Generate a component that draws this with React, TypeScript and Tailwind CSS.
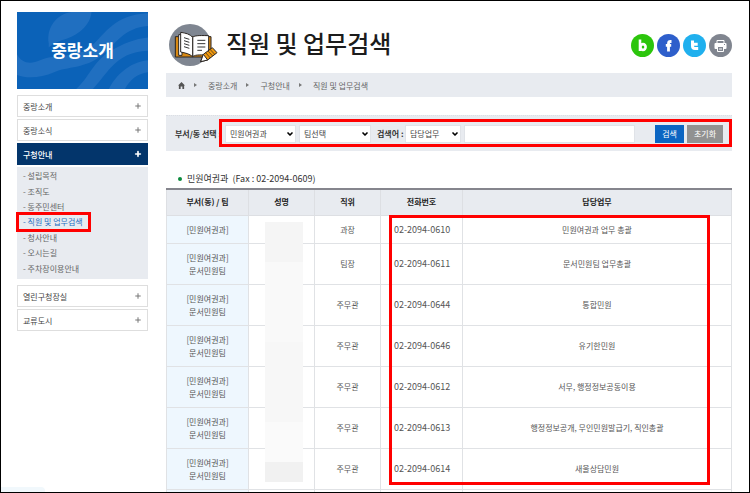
import React from "react";
import { ChevronDown, Plus } from "lucide-react";

const subMenu = ["설립목적", "조직도", "동주민센터", "직원 및 업무검색", "청사안내", "오시는길", "주차장이용안내"];

const breadcrumbs = ["중랑소개", "구청안내", "직원 및 업무검색"];

const rows = [
  { team: "", position: "과장", phone: "02-2094-0610", duty: "민원여권과 업무 총괄" },
  { team: "문서민원팀", position: "팀장", phone: "02-2094-0611", duty: "문서민원팀 업무총괄" },
  { team: "문서민원팀", position: "주무관", phone: "02-2094-0644", duty: "통합민원" },
  { team: "문서민원팀", position: "주무관", phone: "02-2094-0646", duty: "유기한민원" },
  { team: "문서민원팀", position: "주무관", phone: "02-2094-0612", duty: "서무, 행정정보공동이용" },
  { team: "문서민원팀", position: "주무관", phone: "02-2094-0613", duty: "행정정보공개, 무인민원발급기, 직인총괄" },
  { team: "문서민원팀", position: "주무관", phone: "02-2094-0614", duty: "새울상담민원" },
];

function MenuItem({ label, active = false }: { label: string; active?: boolean }) {
  return (
    <a
      href="#"
      className={
        active
          ? "flex h-[22px] items-center justify-between bg-[#03356b] px-1.5 font-medium text-white"
          : "flex h-[22px] items-center justify-between border border-[#dedede] bg-white px-[5px] text-[#444]"
      }
    >
      {label}
      <Plus className={active ? "size-2 text-white" : "size-2 text-[#777]"} strokeWidth={active ? 5 : 3} />
    </a>
  );
}

function Sidebar() {
  return (
    <nav className="w-[131px] shrink-0 pt-[11px]">
      <div className="relative flex h-[77px] items-center justify-center overflow-hidden bg-[#0b62b8]">
        <svg viewBox="9 6 392 230" className="absolute inset-0 size-full" preserveAspectRatio="none" aria-hidden="true">
          <g fill="#206fc0">
            <path d="M104 100C96 52 128 12 172 6H232C228 48 190 76 150 88C130 94 112 104 104 112Z" />
            <path d="M9 132C22 158 48 164 78 150C120 130 190 146 232 108C272 72 300 14 401 10V48C330 52 302 104 262 136C212 176 160 168 120 186C82 202 40 206 9 194Z" />
            <path d="M186 236C222 206 238 152 290 122C326 100 362 86 401 82V122C350 124 318 142 290 172C270 194 252 220 236 236Z" />
            <path d="M284 236C304 196 344 156 401 150V186C368 190 346 210 332 236Z" />
          </g>
        </svg>
        <h2 className="relative pb-0.5 text-[17px] font-bold text-white">중랑소개</h2>
      </div>
      <div className="mt-1.5 flex flex-col gap-0.5">
        <MenuItem label="중랑소개" />
        <MenuItem label="중랑소식" />
        <MenuItem label="구청안내" active />
        <ul className="grid h-[112px] grid-rows-7 bg-[#e8ebf0] pt-px pb-[3px] text-[#666]">
          {subMenu.map((item) => (
            <li key={item} className="relative flex items-center pl-1.5">
              {item === "직원 및 업무검색" ? (
                <>
                  <a href="#" className="text-[#1f6fc2]">- {item}</a>
                  <span className="absolute -top-0.5 -left-px h-5 w-[75px] border-3 border-[#f00]" />
                </>
              ) : (
                <a href="#">- {item}</a>
              )}
            </li>
          ))}
        </ul>
      </div>
      <div className="mt-1.5 flex flex-col gap-0.5">
        <MenuItem label="열린구청장실" />
        <MenuItem label="교류도시" />
      </div>
    </nav>
  );
}

function BookIcon() {
  return (
    <svg viewBox="27 72 147 126" className="h-[42px] w-[49px]" aria-hidden="true">
      <circle cx="90" cy="135" r="63" fill="#7f8691" />
      <g stroke="#2a2522" strokeWidth="3" strokeLinejoin="round">
        <path d="M46 110h107v61H46z" fill="#d98a14" />
        <path d="M56 104h10v62H56z" fill="#fff" />
        <path d="M98 112c6-5 14-6 48-5v58c-34-1-42 0-48 5z" fill="#fff" />
        <path d="M62 97c14 2 28 5 36 15v58c-10-9-22-11-36-14z" fill="#fff" />
      </g>
      <path d="M72 113l16 5M72 122l16 5M72 131l16 5M72 140l16 5M112 121h24M112 131h24M112 141h24M112 151h14" stroke="#333" strokeWidth="3" fill="none" />
      <g stroke="#2a2522" strokeWidth="3" strokeLinejoin="round">
        <path d="M122 185l8-22 27-20 14 15-28 22z" fill="#f0990f" />
        <path d="M122 185l8-22 13 17z" fill="#fff" />
        <path d="M137 158l14 16M144 153l14 15M150 148l14 15" fill="none" strokeWidth="2" />
      </g>
    </svg>
  );
}

function SocialLinks() {
  return (
    <div className="flex gap-[3px]">
      <a href="#" aria-label="블로그" className="size-[23px] rounded-full bg-[#2cc50c]">
        <svg viewBox="0 0 23 23" fill="none" stroke="#fff" strokeWidth="2.6"><path d="M9 5.500v11.500" /><ellipse cx="12" cy="13" rx="2.600" ry="2.900" /></svg>
      </a>
      <a href="#" aria-label="페이스북" className="size-[23px] rounded-full bg-[#2e5fcb]">
        <svg viewBox="0 0 23 23" fill="none" stroke="#fff" strokeWidth="2.800"><path d="M14.500 7.500h-1c-1.400 0-2 .6-2 2V17.500M8.800 11.300h5.400" /></svg>
      </a>
      <a href="#" aria-label="트위터" className="size-[23px] rounded-full bg-[#20b0ee]">
        <svg viewBox="0 0 23 23" fill="none" stroke="#fff" strokeWidth="3"><path d="M9.500 6.500v5.500c0 2 .8 2.500 2.500 2.500h3.200M9.500 10.200h5.200" /></svg>
      </a>
      <button type="button" aria-label="인쇄" className="size-[23px] rounded-full bg-[#80858f]">
        <svg viewBox="0 0 23 23">
          <path d="M8 6.500h7v3H8z" fill="#80858f" stroke="#fff" />
          <rect x="5.500" y="9" width="12" height="6" rx="1" fill="#fff" />
          <path d="M8.500 12.500h6v5h-6z" fill="#80858f" stroke="#fff" />
          <path d="M10 15h3" stroke="#fff" />
          <path d="M15 10.500h1" stroke="#80858f" />
        </svg>
      </button>
    </div>
  );
}

function Select({ label, value, width }: { label: string; value: string; width: string }) {
  return (
    <div className={`relative h-[18px] shrink-0 ${width}`}>
      <select aria-label={label} className="size-full appearance-none border border-[#e0e3e8] bg-white pl-1 text-[8px] text-[#444]">
        <option>{value}</option>
      </select>
      <ChevronDown className="pointer-events-none absolute top-[5px] right-0.5 size-2 text-black" strokeWidth={5} />
    </div>
  );
}

function SearchForm() {
  return (
    <form className="relative mt-[18px] flex h-9 items-center border-t border-dotted border-[#dcdfe4] bg-[#e8ebf0] px-[9px]">
      <span className="w-[50px] shrink-0 font-bold whitespace-nowrap text-[#333]">부서/동 선택 :</span>
      <div className="flex gap-[3px]">
        <Select label="부서/동" value="민원여권과" width="w-[71px]" />
        <Select label="팀" value="팀선택" width="w-[72px]" />
      </div>
      <label htmlFor="keyword" className="ml-1.5 w-7 shrink-0 font-bold whitespace-nowrap text-[#333]">검색어 :</label>
      <Select label="검색 구분" value="담당업무" width="w-[56px]" />
      <input id="keyword" type="text" className="ml-[3px] h-[18px] min-w-0 flex-1 border border-[#e0e3e8] bg-white px-1" />
      <button type="submit" className="ml-5 h-[18px] w-[29px] shrink-0 bg-[#0b65c2] text-white">검색</button>
      <button type="reset" className="ml-[3px] h-[18px] w-9 shrink-0 bg-[#919191] text-white">초기화</button>
      <span className="pointer-events-none absolute top-[3px] right-0 left-[53px] h-7 border-3 border-[#f00]" />
    </form>
  );
}

function StaffTable() {
  return (
    <div className="relative mt-[3px]">
      <table className="w-full table-fixed border-collapse border-t-2 border-[#85858d] text-center text-[#555]">
        <colgroup>
          <col className="w-[82px]" />
          <col className="w-[66px]" />
          <col className="w-[66px]" />
          <col className="w-[82px]" />
          <col />
        </colgroup>
        <thead>
          <tr className="h-[26px] bg-[#e8ebf0] text-[#222]">
            {["부서(동) / 팀", "성명", "직위", "전화번호", "담당업무"].map((heading) => (
              <th key={heading} className="border-x border-b border-[#dddfe3] pb-0.5 font-bold">{heading}</th>
            ))}
          </tr>
        </thead>
        <tbody>
          {rows.map((row) => (
            <tr key={row.phone} className={row.team ? "h-[41px]" : "h-7"}>
              <td className="border border-[#e0e2e5] bg-[#eef7fe]">
                [민원여권과]
                {row.team && <div>{row.team}</div>}
              </td>
              <td className="border border-[#e0e2e5]" />
              <td className="border border-[#e0e2e5]">{row.position}</td>
              <td className="border border-[#e0e2e5] pl-[13px] text-left text-[9px]">{row.phone}</td>
              <td className="border border-[#e0e2e5]">{row.duty}</td>
            </tr>
          ))}
          <tr className="h-[41px]">
            <td className="border border-[#e0e2e5] bg-[#eef7fe]" />
            <td className="border border-[#e0e2e5]" />
            <td className="border border-[#e0e2e5]" />
            <td className="border border-[#e0e2e5]" />
            <td className="border border-[#e0e2e5]" />
          </tr>
        </tbody>
      </table>
      <div className="absolute top-[34px] left-[99px] w-[38px]">
        <div className="h-10 bg-[#f5f5f5]" />
        <div className="h-20 bg-[#f9f9f9]" />
        <div className="h-20 bg-[#f7f7f7]" />
        <div className="h-10 bg-[#fafafa]" />
        <div className="h-5 bg-[#f1f1f1]" />
      </div>
      <div className="pointer-events-none absolute top-[27px] right-[22px] left-[223px] h-[270px] border-3 border-[#f00]" />
    </div>
  );
}

export default function App() {
  return (
    <div className="relative flex h-screen gap-[18px] overflow-hidden border border-black bg-white pr-[17px] pl-4 font-['Noto_Sans_CJK_KR',sans-serif] text-[8px] leading-[13px]">
      <Sidebar />
      <main className="min-w-0 flex-1">
        <header className="flex h-[72px] items-center pt-4 pl-[3px]">
          <BookIcon />
          <h1 className="ml-2 flex-1 pb-1 text-[24px] leading-8 font-medium text-[#1c1c1c]">직원 및 업무검색</h1>
          <SocialLinks />
        </header>
        <div className="flex h-6 items-center bg-[#e8ebf0] pl-3 text-[#666]">
          <a href="#" aria-label="홈">
            <svg viewBox="0 0 8 8" className="size-[7px]" fill="#555"><path d="M4 0l4 4H7v4H5V5H3v3H1V4H0z" /></svg>
          </a>
          {breadcrumbs.map((crumb) => (
            <React.Fragment key={crumb}>
              <svg viewBox="0 0 3 4" className="mr-[11px] ml-[9px] h-1 w-[3px]" fill="#777" aria-hidden="true"><path d="M0 0l3 2-3 2z" /></svg>
              <a href="#">{crumb}</a>
            </React.Fragment>
          ))}
        </div>
        <SearchForm />
        <h3 className="mt-[21px] flex items-center pl-3 text-[9px] text-[#333]">
          <span className="mr-[5px] size-1 rounded-full bg-[#0a8a3c]" />
          <span className="whitespace-pre">민원여권과  (Fax : 02-2094-0609)</span>
        </h3>
        <StaffTable />
      </main>
      <div className="absolute bottom-0 left-0 h-[5px] w-11 rounded-tr-sm bg-[#f1f8fc]" />
    </div>
  );
}
